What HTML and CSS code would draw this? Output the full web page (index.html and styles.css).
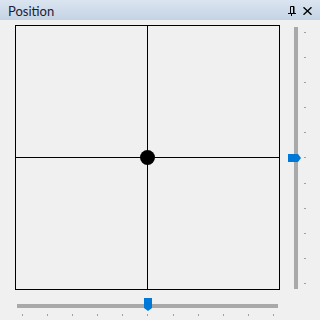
FILE: index.html
```html
<!DOCTYPE html>
<html>
<head>
<meta charset="utf-8">
<link rel="stylesheet" href="styles.css">
</head>
<body>
<div class="panel">
  <div class="titlebar">
    <span class="title">Position</span>
    <span class="tools">
      <svg class="pin" width="8" height="10" viewBox="0 0 8 10"><path d="M2.5 0.5H6V7M2.5 0.5V7M5.5 0.5V7" fill="none" stroke="#000" stroke-width="1"/><path d="M0 7.5H8" stroke="#000" stroke-width="1"/><path d="M3.5 8V10" stroke="#000" stroke-width="1"/></svg>
      <svg class="close" width="9" height="8" viewBox="0 0 9 8"><path d="M0.5 0.3L8.5 7.7M8.5 0.3L0.5 7.7" stroke="#000" stroke-width="1.4"/></svg>
    </span>
  </div>
  <div class="content">
    <div class="canvas">
      <div class="hline"></div>
      <div class="vline"></div>
      <div class="dot"></div>
    </div>
    <div class="vslider">
      <div class="vtrack"></div>
      <div class="vticks">
        <i></i><i></i><i></i><i></i><i></i><i></i><i></i><i></i><i></i><i></i><i></i>
      </div>
      <svg class="vthumb" width="13" height="8" viewBox="0 0 13 8"><polygon points="0,0 10,0 13,4 10,8 0,8" fill="#0078d7"/></svg>
    </div>
    <div class="hslider">
      <div class="htrack"></div>
      <div class="hticks">
        <i></i><i></i><i></i><i></i><i></i><i></i><i></i><i></i><i></i><i></i><i></i>
      </div>
      <svg class="hthumb" width="8" height="13" viewBox="0 0 8 13"><polygon points="0,0 8,0 8,10 4,13 0,10" fill="#0078d7"/></svg>
    </div>
  </div>
</div>
</body>
</html>
```
FILE: styles.css
```css
html, body {
  margin: 0;
  padding: 0;
  background: #f0f0f0;
}
.panel {
  width: 320px;
  height: 320px;
  background: #f0f0f0;
  font-family: "Lato", "Open Sans", sans-serif;
}
.titlebar {
  height: 20px;
  background: linear-gradient(to bottom, #dbe5f1, #c4d3e5);
  display: flex;
  align-items: center;
  justify-content: space-between;
  padding: 0 8px;
  box-sizing: border-box;
}
.title {
  font-size: 13px;
  color: #1b1b3a;
  line-height: 20px;
  margin-top: 1px;
}
.tools {
  display: flex;
  align-items: center;
  gap: 7px;
}
.pin { display: block; margin-top: 1px; }
.close { display: block; margin-top: 2px; }
.content {
  display: grid;
  grid-template-columns: 265px 41px;
  grid-template-rows: 265px 30px;
  padding: 5px 0 0 15px;
}
.canvas {
  position: relative;
  border: 1px solid #000;
  box-sizing: border-box;
  width: 265px;
  height: 265px;
}
.hline {
  position: absolute;
  left: 0;
  right: 0;
  top: 131px;
  height: 1px;
  background: #000;
}
.vline {
  position: absolute;
  top: 0;
  bottom: 0;
  left: 131px;
  width: 1px;
  background: #000;
}
.dot {
  position: absolute;
  left: 124px;
  top: 124px;
  width: 15px;
  height: 15px;
  border-radius: 50%;
  background: #000;
}
.vslider {
  position: relative;
  display: flex;
  align-items: flex-start;
}
.vtrack {
  margin: 2px 0 0 14px;
  width: 4px;
  height: 262px;
  background: #a9a9a9;
}
.vticks {
  margin: 7px 0 0 6px;
  height: 252px;
  display: flex;
  flex-direction: column;
  justify-content: space-between;
}
.vticks i {
  display: block;
  width: 2px;
  height: 1px;
  background: #a0a0a0;
}
.vthumb {
  position: absolute;
  left: 8px;
  top: 129px;
}
.hslider {
  position: relative;
  grid-column: 1;
}
.htrack {
  margin: 14px 0 0 2px;
  width: 261px;
  height: 4px;
  background: #a9a9a9;
}
.hticks {
  margin: 6px 0 0 7px;
  width: 252px;
  display: flex;
  justify-content: space-between;
}
.hticks i {
  display: block;
  width: 1px;
  height: 2px;
  background: #a0a0a0;
}
.hthumb {
  position: absolute;
  left: 129px;
  top: 8px;
}
```
